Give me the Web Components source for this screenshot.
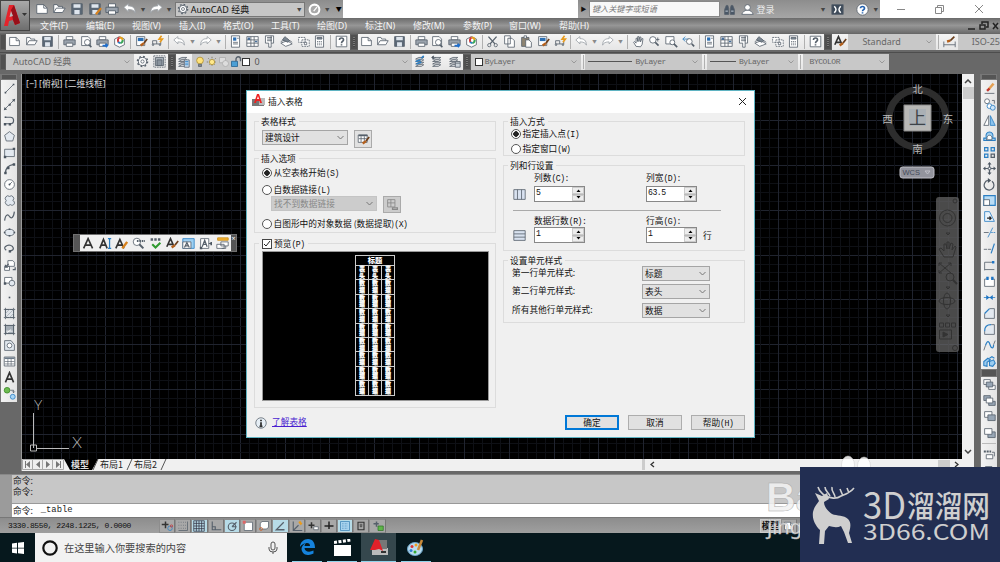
<!DOCTYPE html>
<html lang="zh-CN">
<head>
<meta charset="utf-8">
<title>AutoCAD 经典</title>
<style>
    :root {
        --ui: "Noto Sans", "Noto Sans CJK SC", sans-serif;
        --cjk: "Noto Sans CJK SC", sans-serif;
        --mono: "Liberation Mono", "Noto Sans CJK SC", monospace;
        --chrome: #686868;
        --tool: #efefef;
        --field: #c8c8c8;
    }
    * { box-sizing: border-box; }
    body {
        margin: 0;
        width: 1000px;
        height: 562px;
        overflow: hidden;
        position: relative;
        display: flex;
        flex-direction: column;
        background: var(--chrome);
        font: 8.7px/1 var(--cjk);
        color: #111;
    }
    .bars { display: flex; align-items: center; height: 17px; flex: none; }
    .row1 { height: 17px; }
    .row2 { margin: 2px 0 4px; height: 18px; border-top: 1px solid #4d4d4d; }
    .work { display: flex; height: 397px; flex: none; }
</style>
</head>
<body>
    <app-header></app-header>
    <div class="bars row1">
        <tool-grip></tool-grip>
        <tool-bar items="new open save | print preview plot publish | match block | undo v redo v | props center palette sheet markup calc | help"></tool-bar>
        <tool-grip></tool-grip>
        <tool-bar items="new open save | print preview plot publish | cut copy paste match block | undo v redo v | pan zoomrt zoomwin zoomprev | props center palette sheet markup calc | help"></tool-bar>
        <tool-grip></tool-grip>
        <tool-bar items="textstyle"></tool-bar>
        <cad-combo w="88" pad="14" ui>Standard</cad-combo>
        <tool-bar items="| dimstyle"></tool-bar>
        <cad-combo w="60" pad="14" ui>ISO-25</cad-combo>
    </div>
    <div class="bars row2">
        <tool-grip></tool-grip>
        <cad-combo w="128" pad="7" ui>AutoCAD 经典</cad-combo>
        <tool-bar items="gear wsave"></tool-bar>
        <tool-grip></tool-grip>
        <tool-bar items="layers"></tool-bar>
        <layer-combo></layer-combo>
        <tool-bar items="lmake lprev lstate"></tool-bar>
        <tool-grip></tool-grip>
        <cad-combo w="110" pad="4" swatch>ByLayer</cad-combo>
        <tool-bar items="|"></tool-bar>
        <cad-combo w="117" pad="3" line="44">ByLayer</cad-combo>
        <tool-bar items="|"></tool-bar>
        <cad-combo w="91" pad="3" line="26">ByLayer</cad-combo>
        <tool-bar items="|"></tool-bar>
        <cad-combo w="86" pad="7">BYCOLOR</cad-combo>
    </div>
    <div class="work">
        <tool-column items="line xline pline polygon rect arc circle cloud spline ellipse earc insert mkblock point hatch grad region table mtext addsel" last></tool-column>
        <drawing-area></drawing-area>
        <tool-column items="erase copyobj mirror offset array move rotate scale stretch trim extend brkpt break join chamfer fillet blend explode = front back above under - tofront more"></tool-column>
    </div>
    <command-line></command-line>
    <status-bar></status-bar>
    <task-bar></task-bar>

    <float-bar></float-bar>
    <table-dialog></table-dialog>
    <page-mark></page-mark>
    <site-badge></site-badge>

<script>
// 16x16 icons, default stroke comes from the svg element
const W = 'fill="#fff"';
const B = 'stroke="#2b7fc4"';
const O = 'stroke="#d8821e"';
const DOC = `<path ${W} d="M2 3h8l4 4v6H2z"/><path d="M10 3v4h4"/>`;
const PRN = `<path ${W} d="M4 2h8v4H4z"/><path fill="#9aa3ad" d="M1 6h14v6H1z"/><path ${W} d="M4 10h8v4H4z"/>`;
const LAY = `<path ${W} d="M2 5l4-2h6l-3 2zM2 8l4-2h6l-3 2zM2 11l4-2h6l-3 2zM2 14l4-2h6l-3 2z"/>`;
const BRUSH = `<path stroke="#6b3f1d" stroke-width="2" d="M15 5l-4 5"/><path stroke="#b5601c" stroke-width="3" d="M11 10l-4 3"/>`;
const ICONS = {
    new: DOC,
    open: `<path ${W} d="M2 12V3h4l1 2h5v2"/><path ${W} d="M2 12l3-5h10l-3 5z"/>`,
    save: `<path fill="#5b6876" d="M2 2h12v12H2z"/><path fill="#dfe6ee" stroke="none" d="M4 2.500h8v4H4zM5 9h6v5H5z"/>`,
    saveas: `<path fill="#5b6876" d="M2 2h12v12H2z"/><path fill="#dfe6ee" stroke="none" d="M4 2.500h8v4H4zM5 9h6v5H5z"/><path ${O} stroke-width="2.500" d="M15 7l-6 7"/>`,
    print: PRN,
    preview: `<path ${W} d="M2 2h8l3 3v8H2z"/><circle cx="9" cy="9" r="3.500" ${W}/><path stroke-width="2" d="M11 12l3 3"/>`,
    plot: PRN + `<path stroke="#1d6fd0" stroke-width="2" d="M8 13h6m-2-2l2 2-2 2"/>`,
    publish: `<path ${W} d="M2 5l6-3 6 3v7l-6 3-6-3z"/><path stroke="#e5a11b" stroke-width="2.500" d="M8 3a4 4 0 0 1 4 3"/><path stroke="#3aa654" stroke-width="2.500" d="M12 6a4 4 0 0 1-3 4"/><path stroke="#d23c3c" stroke-width="2.500" d="M8 3a4 4 0 0 0-1 6"/><path stroke="#2b7fc4" stroke-width="2" d="M6 9l3 1"/>`,
    match: `<path ${W} d="M2 2h10v11H2z"/><path fill="#2b6fb4" stroke="none" d="M3.500 3.500h7v4h-7z"/>` + BRUSH,
    block: `<path d="M2 11V7h5v4m-5 0h10V8"/><circle cx="2.500" cy="12" r="1"/><circle cx="11" cy="12" r="1"/><path stroke="#e79a1c" stroke-width="2" d="M13 1l-3 4h4l-3 4"/>`,
    undo: `<path ${W} stroke="#9aa0a6" d="M1 6l5-4v2.500c5 0 8 2 8 8-1-3-4-4-8-4V11z"/>`,
    redo: `<path ${W} stroke="#9aa0a6" d="M15 6l-5-4v2.500c-5 0-8 2-8 8 1-3 4-4 8-4V11z"/>`,
    props: `<path ${W} d="M3 1h10v14H3z"/><path fill="#2b6fb4" stroke="none" d="M5 3h4v4H5z"/><path d="M5 9h6M5 11h6M10 4h2"/>`,
    center: `<path ${W} d="M1 2h14v12H1zM6 2v12M1 6h14M1 10h14M10 2v12"/><path fill="#4a6f99" stroke="none" d="M2 3h3v3H2zM11 7h3v2h-3z"/>`,
    palette: `<path ${W} d="M3 1h10v9h-3v5H7v-5H3z"/><path d="M5 3h6M5 5h6M5 7h6M10 1v9"/>`,
    sheet: `<path ${W} d="M1 10l8-3 6 4-8 3zM1 8l8-3 6 4"/><path fill="#7c8792" d="M3 6l3-4 6 5-2 2z"/>`,
    markup: `<path ${W} stroke-dasharray="2 1" d="M2 3h8v6H2zM6 6h9v8H6z"/><path d="M9 9h3v3H9z"/>`,
    calc: `<path ${W} d="M3 1h10v14H3z"/><path fill="#8a95a0" d="M5 3h6v2H5z"/><path stroke-dasharray="1.500 1" d="M5 8h6M5 10h6M5 12h6"/>`,
    help: `<path ${W} d="M1.500 1.500h13v13h-13z"/><path stroke-width="2" d="M5.500 6c0-3 5-3 5 0 0 2-2.500 1.500-2.500 4M8 11.500v1.500"/>`,
    cut: `<path stroke-width="1.600" d="M3 2l8 9M13 2l-8 9"/><circle cx="4" cy="12.500" r="2"/><circle cx="12" cy="12.500" r="2"/>`,
    copy: `<path ${W} d="M2 1h7v10H2zM6 4h5l3 3v8H6z"/>`,
    paste: `<path fill="#8e8472" d="M2 3h9v11H2z"/><path ${W} d="M5 1h3v3H5zM7 6h4l3 3v6H7z"/>`,
    pan: `<path ${W} d="M5 14L2 9l1-1 2 2V4l1.500 0 .5 4V2h1.500v6l1-5.500h1.500l-.5 6 1.500-4 1.500 0-1 7-2 3z"/>`,
    zoomrt: `<circle cx="6" cy="6" r="4" ${W}/><path stroke-width="2" d="M9 9l4 4"/><path d="M12 3v5m-2-2.500h4"/>`,
    zoomwin: `<path ${W} d="M1 2h10v9H1z"/><circle cx="9" cy="9" r="3" ${W}/><path stroke-width="2" d="M11 11l4 4"/>`,
    zoomprev: `<path ${B} d="M1 5h8M4 2L1 5l3 3"/><circle cx="9" cy="8" r="3.500" ${W}/><path stroke-width="2" d="M12 11l3 3"/>`,
    textstyle: `<path stroke="#333" stroke-width="2" d="M1 12L5.500 2 10 12M3 9h5"/>` + BRUSH,
    dimstyle: `<path d="M1 12h14M1 8v7M15 8v7"/><path stroke="#b5601c" stroke-width="3" d="M5 8l4-1"/><path stroke="#6b3f1d" stroke-width="2" d="M9 7l5-5"/>`,
    gear: `<circle cx="8" cy="8" r="5" ${W} stroke-width="1.200"/><circle cx="8" cy="8" r="6.300" stroke-dasharray="2.200 2.750" stroke-width="1.600"/><circle cx="8" cy="8" r="2"/>`,
    wsave: `<path fill="#a9b1b9" d="M3 3h10v10H3z"/><path stroke-dasharray="2 1" d="M1 1h14v14H1z"/><path fill="#8a949e" d="M5 6h6v7H5z"/>`,
    layers: LAY + `<path fill="#cfe2f5" d="M9 6h6v9H9z"/><path ${B} d="M10 8h4M10 10h4M10 12h4"/>`,
    lmake: LAY + `<path ${B} stroke-width="2" d="M3 11l6-2M2 8l6-2M12 1l-3 3"/>`,
    lprev: LAY + `<path fill="#222" d="M1 3h5M1 3l2-2v4z"/>`,
    lstate: LAY + `<path fill="#cdd4db" d="M9 8h6v7H9z"/><path d="M9 10h6"/>`,
    bulb: `<circle cx="8" cy="6" r="4.500" fill="#ffe27a" stroke="#a98a2a"/><path fill="#888" d="M6 11h4v3H6z"/>`,
    sun: `<path stroke="#6f6a50" stroke-dasharray="2 3" d="M8 1v14M1 8h14M3 3l10 10M13 3L3 13"/><circle cx="8" cy="8" r="3.500" fill="#ffe98c" stroke="#a98a2a"/>`,
    vpf: `<path fill="#ddd" stroke="#aaa" d="M2 2h8v7H2z"/><circle cx="10" cy="10" r="4" fill="#ddd" stroke="#aaa"/>`,
    lock: `<path fill="#4b9fd5" stroke="#1f5e8c" d="M2 7h8v7H2z"/><path stroke-width="1.800" d="M8 7V4a3 3 0 0 1 6 0v3"/>`,
    line: `<path d="M3 13L13 3"/><path class="d" d="M2 12h2v2H2zM12 2h2v2h-2z"/>`,
    xline: `<path d="M2 14L14 2"/><path class="d" d="M1 15l1-4 3 3zM15 1l-4 1 3 3zM7 7h2.500v2.500H7z"/>`,
    pline: `<path stroke-width="1.500" d="M3 12h6a4 4 0 0 0 0-8H3"/><path class="d" d="M1 11h3v3H1zM7 11h3v3H7zM2 3h2v2H2z"/>`,
    polygon: `<path fill="#e3e9f0" d="M8 2l6 4.500-2 7H4l-2-7z"/>`,
    rect: `<path fill="#e3e9f0" d="M2 4h12v9H2z"/><path class="d" d="M1 12h3v3H1zM12 2h3v3h-3z"/>`,
    arc: `<path stroke-width="1.500" d="M3 14C3 8 7 4 13 3"/><path class="d" d="M1.500 12h3v3h-3zM12 1.500h3v3h-3zM5 6h3v3H5z"/>`,
    circle: `<circle cx="8" cy="8" r="6" ${W}/><path d="M8 8l3-3"/><circle class="d" cx="8" cy="8" r="1.200"/>`,
    cloud: `<path fill="#e3e9f0" d="M4 8a3 3 0 1 1 4-5 3 3 0 1 1 4 5 3 3 0 1 1-3 5 3 3 0 1 1-5-5z"/>`,
    spline: `<path stroke-width="1.500" d="M2 13c1-8 4-8 6-5s5 2 6-6"/>`,
    ellipse: `<ellipse cx="8" cy="8" rx="6" ry="4" fill="#e3e9f0"/><path class="d" d="M7 3h2v2H7zM1 7h2v2H1zM13 7h2v2h-2zM7 11h2v2H7z"/>`,
    earc: `<path stroke-width="1.500" d="M4 10c-5-3 1-7 5-6s6 6 0 7"/><path class="d" d="M7 10h3v3H7z"/>`,
    insert: `<path ${W} d="M6 2h6l2 2v5H6zM2 9h6v5H2z"/><path stroke-width="1.500" d="M7 6l-4 4m0-3v3h3M12 13h3v-3"/>`,
    mkblock: `<path ${W} d="M2 3h9v7H2z"/><circle cx="11" cy="10" r="3.500" fill="#e3e9f0"/><path class="d" d="M1 9h3v3H1z"/>`,
    point: `<path class="d" d="M7 7h2v2H7z"/>`,
    hatch: `<path fill="#dfe3e8" d="M3 3h10v10H3z"/><path d="M3 1v14M13 1v14M1 3h14M1 13h14"/><path stroke="#98a1aa" d="M3 8l5-5M3 13L13 3M8 13l5-5" stroke-width=".8"/>`,
    grad: `<path fill="#a5adb5" d="M3 3h10v10H3z"/><path d="M3 1v14M13 1v14M1 3h14M1 13h14"/><path stroke="#fff" d="M4 10h8M5 12l5-4"/>`,
    region: `<path fill="#e3e9f0" d="M2 2h8l4 5v7H2z"/><circle cx="8" cy="8" r="3" ${W}/>`,
    table: `<path ${W} d="M1.500 2.500h13v11h-13z"/><path fill="#6c7a89" stroke="none" d="M2 3h12v2H2z"/><path stroke-width=".8" d="M2 8h12M2 11h12M6 5v8M10 5v8"/>`,
    mtext: `<path stroke="#333" stroke-width="2" d="M3 14L8 2l5 12M5 10h6"/>`,
    addsel: `<circle cx="5" cy="4" r="3.500" fill="#6dbb4f" stroke="#3c8a2a"/><circle cx="12" cy="12" r="3" fill="#a9d6f5" stroke="#2b7fc4"/><path d="M9 4h4v3m-1.500-1.500L13 7l1.500-1.500"/>`,
    erase: `<path stroke="#e4a052" stroke-width="3" d="M13 2L7 9"/><path stroke="#c2372f" stroke-width="3" d="M8 8l-3 3"/><path d="M2 14h12"/>`,
    copyobj: `<circle cx="5" cy="4" r="3" ${W}/><circle cx="8" cy="10" r="3" fill="#fff" ${B}/><circle cx="12" cy="12" r="3" fill="#cde6fa" ${B}/><path d="M11 3h3v4"/>`,
    mirror: `<path ${W} d="M7 2v12H1z"/><path fill="#8cc4ee" ${B} d="M9 2v12h6z"/>`,
    offset: `<path fill="#9ccdf0" ${B} stroke-width="1.300" d="M1 13h14v-3h-3c3-10-11-10-8 0H1z"/><path ${W} d="M4 12h7v-1c1-6-7-6-6 0z"/>`,
    array: `<path ${B} stroke-width="1.500" d="M2 2h4v4H2zM10 2h4v4h-4zM2 10h4v4H2z"/><path stroke-width="1.500" d="M10 10h4v4h-4z"/>`,
    move: `<path stroke-width="1.500" d="M8 2v12M2 8h12"/><path class="d" d="M8 0l2.500 3h-5zM8 16l2.500-3h-5zM0 8l3-2.500v5zM16 8l-3-2.500v5z"/><path ${W} d="M6.500 6.500h3v3h-3z"/>`,
    rotate: `<path stroke-width="1.500" d="M6 3a6 6 0 1 0 5 1"/><path class="d" d="M6 0v6l4-3z"/>`,
    scale: `<path fill="#b9dcf5" ${B} stroke-width="1.500" d="M1 2h14v12H1z"/><path ${W} d="M1 7h7v7H1z"/>`,
    stretch: `<path fill="#e9f3fb" ${B} d="M2 2h6l6 12H2z"/><path stroke="#222" stroke-width="1.500" d="M5 10h5m-2-2l2 2-2 2"/>`,
    trim: `<path ${B} d="M6 14L12 2"/><path d="M1 8h6"/><path ${B} stroke-dasharray="2 1" d="M10 8h5"/>`,
    extend: `<path ${B} stroke-width="1.500" d="M10 14l4-12"/><path stroke-dasharray="4 1" d="M1 9h10"/>`,
    brkpt: `<path d="M2 14V4h9M2 13h12"/><path class="b" d="M11 2.500h3v3h-3z"/>`,
    break: `<path ${W} d="M4 5H2v9h12V5h-2"/><path class="b" d="M4 2h3v4H4zM10 2h3v4h-3z"/>`,
    join: `<path ${B} d="M1 8h14"/><path class="b" d="M4 5l4 3-4 3zM12 5L8 8l4 3z"/>`,
    chamfer: `<path fill="#e3e9f0" d="M8 2h6v12H2V8"/><path ${B} stroke-width="1.500" d="M2 8l6-6"/>`,
    fillet: `<path fill="#e3e9f0" d="M10 2h4v12H2v-4"/><path ${B} stroke-width="1.500" d="M2 10c0-5 3-8 8-8"/>`,
    blend: `<path ${B} stroke-width="1.500" d="M3 8c3-9 5-3 6 0s4 5 4-1"/><path d="M1 14l2-6M13 7l2-5"/>`,
    explode: `<path fill="#9ccdf0" ${B} stroke-width="1.300" d="M1 13V8l5-4 3 2-4 3v5zM8 13V8l5-2 2 4-3 4zM8 4l3-2 3 2"/>`,
    front: `<path ${W} d="M1 2h8v6H1zM7 9h8v5H7z"/><path fill="#98a6b5" d="M4 5h8v6H4z"/>`,
    back: `<path fill="#98a6b5" d="M1 2h8v6H1zM7 9h8v5H7z"/><path ${W} d="M4 5h8v6H4z"/>`,
    above: `<path ${W} d="M2 2h9v7H2z"/><path fill="#98a6b5" d="M6 6h9v7H6z"/>`,
    under: `<path fill="#98a6b5" d="M6 6h9v7H6z"/><path ${W} d="M2 2h9v7H2z"/>`,
    tofront: `<path stroke-width="2.500" stroke-dasharray="2.500 1" d="M1 3h9"/><path ${W} d="M4 7h8v5H4z"/><path d="M11 4h3v5"/>`,
    more: `<path fill="#7c8b9b" d="M3 2h8v5H3z"/><path ${W} d="M7 6h7v8H7z"/>`,
    txtA: `<path stroke="#333" stroke-width="2" d="M2 14L7.500 2 13 14M4 10h7"/>`,
    txtI: `<path stroke="#333" stroke-width="2" d="M1 14L5.500 3 10 14M3 10h6"/><path ${B} stroke-width="1.500" d="M13 2v12M11 2h4M11 14h4"/>`,
    txtE: `<path stroke="#333" stroke-width="2" d="M1 14L6 3l5 11M3 10h6"/><path ${O} stroke-width="3" d="M15 6l-6 8"/>`,
    find: `<circle cx="6" cy="6" r="4.500" ${W}/><path stroke-width="2.500" d="M9 9l5 5"/><path stroke-width="2.500" stroke-dasharray="2 1" d="M6 5h10"/>`,
    spell: `<path stroke-width="3" stroke-dasharray="3 1.500" d="M2 3h13"/><path stroke="#2f9a2f" stroke-width="2.500" d="M4 9l4 4 6-6"/>`,
    tscale: `<path fill="#9dd0f3" ${B} d="M1 2h14v12H1z"/><path ${W} d="M1 6h10v8H1z"/><path stroke-width="1.500" d="M3 13l3-6 3 6M4 11h4"/>`,
    tjust: `<path ${W} d="M2 2h10v12H2z"/><path stroke-width="1.500" d="M4 12l3-8 3 8M5 9h4M12 8h4"/><path class="d" d="M1 12h3v3H1zM14 6h2v4h-2z"/>`,
    tspace: `<path fill="#f2b233" stroke="#c98a12" d="M2 1h13v3H2z"/><path ${W} d="M6 6h9v5H6zM1 9h9v5H1z"/><path d="M12 11v3h-5"/>`,
    infer: `<path stroke="#333" stroke-width="2" d="M6 2v9M1 6h9"/><circle cx="12" cy="11" r="3" stroke="#2b7fc4"/><circle cx="14" cy="8" r="1.500" stroke="#c33"/>`,
    snap: `<path stroke-dasharray="1 2" d="M2 3h10M2 7h10M2 11h10"/><path d="M14 2v12H2"/>`,
    grid: `<path stroke="#334" d="M1 1h14v14H1zM1 4.500h14M1 8h14M1 11.500h14M4.500 1v14M8 1v14M11.500 1v14"/>`,
    ortho: `<path stroke-width="1.500" d="M3 2v11h12M3 9h4v4"/>`,
    polar: `<circle cx="8" cy="9" r="5" stroke-width="1.500"/><path stroke-width="1.500" d="M8 9h6M8 9l6-6"/>`,
    osnap: `<path ${W} d="M3 3h11v11H3z"/><path fill="#d66" stroke="none" d="M1 1h4v4H1z"/>`,
    osnap3: `<path ${W} d="M5 2h9v8l-3 2H3V5z"/><circle cx="4" cy="12" r="2" stroke="#c63"/>`,
    otrack: `<path stroke-width="1.700" d="M13 3L3 13h11"/>`,
    ducs: `<path stroke-width="1.500" d="M3 2v12h12M3 14l7-7"/><path stroke="#e99a1c" stroke-width="3" d="M11 2l3 4"/>`,
    dyn: `<path stroke="#333" stroke-width="2" d="M6 3v8M2 7h8"/><path ${W} d="M9 9h6v4H9z"/>`,
    lwt: `<path stroke="#222" stroke-width="2" d="M2 8h12M8 2v10"/>`,
    tpy: `<path fill="#a9d3ee" stroke="#3c83b5" d="M2 2h12v12H2z"/><path stroke="#3c83b5" stroke-dasharray="1 1" d="M4 5h8M4 8h8M4 11h8"/>`,
    qp: `<path stroke="#333" stroke-width="1.500" d="M4 3h8v10H4z"/><path stroke="#333" d="M7 5v4h2V5"/>`,
    sc: `<path stroke-width="2" d="M2 5h7M6 2v7"/><path fill="#5eb54a" stroke="#32752a" d="M8 8h7v6H8z"/>`,
    binoc: `<path fill="#4a5766" d="M2 14V8l2-5h2l1 4v7zM14 14V8l-2-5h-2L9 7v7z"/><path stroke="#dfe6ee" d="M3 10h3M10 10h3"/>`,
    user: `<circle cx="8" cy="5.500" r="3.500" ${W}/><path ${W} d="M1 14c1-4 4-4 5-5h4c1 1 4 1 5 5z"/>`,
    xchg: `<path fill="#3d4a59" d="M1 2h14v12H1z"/><path stroke="#fff" stroke-width="2" d="M4 4c3 3 3 5 0 8M12 4c-3 3-3 5 0 8"/>`,
    qhelp: `<circle cx="8" cy="8" r="7" ${W}/><path stroke="#2462b0" stroke-width="2" d="M5.500 6.500c0-3 5-3 5 0 0 2-2.500 1.500-2.500 3.500M8 11.500v1.500"/>`,
    gauge: `<circle cx="8" cy="8" r="6" fill="#a9a9a9" stroke="#fff" stroke-width="2.500"/><path stroke="#fff" stroke-width="1.500" d="M7 10l4-5"/>`,
    tablebtn: `<path ${W} d="M1.500 2.500h11v9h-11zM5 4v7M9 4v7M2 7h10"/><path stroke-width="2" d="M2 3h11"/>` + BRUSH,
    linkbtn: `<path stroke="#888" d="M2 2h9v9H2zM2 6h9M6 2v9"/><path stroke="#888" stroke-width="1.500" d="M8 12h6v2H8z"/>`,
    cols: `<path fill="#d9e2f0" d="M1 2h14v12H1zM5.500 2v12M10.500 2v12"/>`,
    rows: `<path fill="#d9e2f0" d="M1 2h14v12H1zM1 6h14M1 10h14"/>`,
    info: `<circle cx="8" cy="8" r="7" fill="#e6eef5"/><path stroke="#333" stroke-width="2.400" d="M8 7v5.500M8 3.500v2M6 12.500h4"/>`
};

class CadElement extends HTMLElement {
    constructor() {
        super();
        this.attachShadow({ mode: "open" });
    }
    connectedCallback() {
        this.shadowRoot.innerHTML = `<style>*{box-sizing:border-box}${this.css()}</style>${this.html()}`;
    }
    css() { return ":host{display:block}"; }
    html() { return "<slot></slot>"; }
}

class CadIcon extends CadElement {
    css() {
        return `:host{display:block;flex:none;line-height:0}
            .d{fill:#4b5560;stroke:none}.b{fill:#1d74c4;stroke:none}`;
    }
    html() {
        const s = this.getAttribute("size") || 13;
        return `<svg width="${s}" height="${s}" viewBox="0 0 16 16" fill="none" stroke="#56606b">${ICONS[this.getAttribute("name")] || ""}</svg>`;
    }
}
customElements.define("cad-icon", CadIcon);

class ToolGrip extends CadElement {
    css() {
        return `:host{display:block;flex:none;width:8px;height:16px;padding:2px 2px;background:#505050;border:1px solid #5f5f5f}
            i{display:block;height:100%;background:repeating-linear-gradient(#777 0 1px,#444 1px 2px)}`;
    }
    html() { return "<i></i>"; }
    connectedCallback() {
        super.connectedCallback();
        // the first grip of a row is cut by the window edge
        if (!this.previousElementSibling) this.style.width = "6px";
    }
}
customElements.define("tool-grip", ToolGrip);

class ToolBar extends CadElement {
    css() {
        return `:host{display:flex;flex:none;height:16px;align-items:center;background:linear-gradient(#f4f4f4,#e6e6e6)}
            .c{width:16.8px;display:flex;justify-content:center}
            .s{width:4.6px;height:14px;display:flex;justify-content:center}
            .s::before{content:"";width:1px;background:#b0b0b0}
            .v{width:9px;text-align:center;font-size:4.500px;color:#888}
            .u{width:17px}`;
    }
    html() {
        return this.getAttribute("items").split(" ").map(n => {
            if (n === "|") return `<span class="s"></span>`;
            if (n === "v") return `<span class="v">▼</span>`;
            return `<span class="c ${n === "undo" || n === "redo" ? "u" : ""}"><cad-icon name="${n}"></cad-icon></span>`;
        }).join("");
    }
}
customElements.define("tool-bar", ToolBar);

class CadCombo extends CadElement {
    css() {
        return `:host{display:flex;flex:none;align-items:center;height:16px;background:var(--field);color:#666;
                width:${this.getAttribute("w")}px;padding:0 4px 0 ${this.getAttribute("pad")}px;
                font:${this.hasAttribute("ui") ? "9px var(--ui)" : "8px var(--mono);letter-spacing:-.45px"};white-space:nowrap}
            span{flex:1}
            .sw{flex:none;width:8px;height:8px;border:1px solid #333;background:#fff;margin-right:2px}
            .ln{flex:none;height:1px;background:#555;margin-right:3px}
            svg{flex:none}`;
    }
    html() {
        const line = this.getAttribute("line");
        return `${this.hasAttribute("swatch") ? `<i class="sw"></i>` : ""}
            ${line ? `<i class="ln" style="width:${line}px"></i>` : ""}
            <span><slot></slot></span>
            <svg width="6" height="4" viewBox="0 0 6 4" fill="none" stroke="#999"><path d="M.5.5L3 3 5.500.5"/></svg>`;
    }
}
customElements.define("cad-combo", CadCombo);

class LayerCombo extends CadElement {
    css() {
        return `:host{display:flex;flex:none;align-items:center;width:220px;height:16px;padding:0 4px 0 2px;background:var(--field);color:#555;font:9px var(--ui)}
            .sw{width:8px;height:8px;border:1px solid #333;background:#fff;margin-right:4px}
            span{flex:1}`;
    }
    html() {
        return ["bulb", "sun", "vpf", "lock"].map(n => `<cad-icon name="${n}" size="12"></cad-icon>`).join("") +
            `<i class="sw"></i><span>0</span><svg width="6" height="4" fill="none" stroke="#999"><path d="M.5.5L3 3 5.500.5"/></svg>`;
    }
}
customElements.define("layer-combo", LayerCombo);

class AppHeader extends CadElement {
    css() {
        return `:host{display:grid;flex:none;grid-template:18px 15px / 30px 1fr;height:33px;background:#777}
            .app{grid-row:1/3;background:linear-gradient(#a9a9a9,#6e6e6e);border:1px solid #444;height:31px}
            .top{display:flex;background:#fff}
            .qa,.info{display:flex;align-items:center;background:linear-gradient(#8d8d8d,#a6a6a6)}
            .qa{width:313px;padding-left:3px}
            .c{width:17.700px;display:flex;justify-content:center}
            .v{width:8.500px;text-align:center;font-size:4.500px;color:#444}
            .ws{display:flex;align-items:center;width:131px;height:15px;background:#c6c6c6;border:1px solid #777;padding:0 1px;margin-left:1.500px;font:9px var(--ui);color:#111}
            .ws b{flex:1;font-weight:400;margin-left:2px;white-space:nowrap}
            .info{margin-left:235px;width:302px}
            .arr{width:11px;text-align:center;font-size:6px;color:#111}
            .find{width:131px;height:16px;background:#f8f8f8;font:italic 8.100px/14px var(--cjk);color:#777;padding-left:2px;margin-right:1px;border:1px solid #888}
            .in{color:#eee;font:9px/1 var(--cjk);flex:1;padding-left:0}
            .win{flex:1;display:flex;justify-content:space-around;align-items:center;padding:0 2px}
            nav{grid-column:2;display:grid;grid-template-columns:46px 46px 47px 44px 48px 46px 48px 48px 50px 46px 50px 1fr auto;
                padding-left:10px;align-items:center;background:linear-gradient(#6b6b6b,#969696 50%,#6d6d6d);color:#f4f4f4;font:9px/14px var(--ui);white-space:nowrap}
            .doc{width:34px}`;
    }
    html() {
        const ic = (n, s = 14) => `<span class="c"><cad-icon name="${n}" size="${s}"></cad-icon></span>`;
        const v = `<span class="v">▼</span>`;
        const menus = ["文件(F)", "编辑(E)", "视图(V)", "插入(I)", "格式(O)", "工具(T)", "绘图(D)", "标注(N)", "修改(M)", "参数(P)", "窗口(W)", "帮助(H)"];
        return `
            <div class="app"><svg width="28" height="29" viewBox="0 0 28 29"><path fill="#e5232b" d="M3 25L8 4h5l6 18-5 2-2-5-4 1-1 5z"/><path fill="#97101a" d="M13 4l6 18-5 2-2-5-2-10z"/><path fill="#bbb" d="M8.500 16l1.500-6 2 5z"/><path fill="#333" d="M21 12h5l-2.500 3z"/></svg></div>
            <div class="top">
                <div class="qa">${ic("new")}${ic("open")}${ic("save")}${ic("saveas")}${ic("print")}${ic("undo")}${v}${ic("redo")}${v}
                    <div class="ws"><cad-icon name="gear" size="12"></cad-icon><b>AutoCAD 经典</b>${v}</div>
                    ${ic("gauge", 13)}${v}<span class="v" style="margin-left:3px;color:#000;font-size:6px">▼</span></div>
                <div class="info"><span class="arr">▶</span><span class="find">键入关键字或短语</span>
                    ${ic("binoc", 13)}${ic("user", 13)}<span class="in">登录</span>${v}
                    <span style="width:2px"></span>${ic("xchg", 13)}<span style="width:7px"></span>${ic("qhelp", 13)}${v}</div>
                <div class="win">
                    <svg width="8" height="8" stroke="#888"><path d="M0 4.500h8"/></svg>
                    <svg width="9" height="9" fill="none" stroke="#888"><path d="M.5 2.500h6v6h-6zM2.500 2V.5h6v6H7"/></svg>
                    <svg width="8" height="8" stroke="#888"><path d="M0 0l8 8M8 0L0 8"/></svg>
                </div>
            </div>
            <nav>${menus.map(m => `<span>${m}</span>`).join("")}
                <svg class="doc" height="10" fill="none" stroke="#222" stroke-width="1.500"><path d="M2 8h7M14 4h5v4h-5zM16 3V1h6v5h-2M27 2l5 6M32 2l-5 6"/></svg></nav>`;
    }
}
customElements.define("app-header", AppHeader);

class ToolColumn extends CadElement {
    css() {
        return `:host{display:block;flex:none;width:18px;padding-right:1px}
            .box{background:linear-gradient(90deg,#f3f3f3,#e4e4e4);border-left:1px solid #777}
            .c{height:16.100px;display:flex;align-items:center;justify-content:center}
            .g{height:6px;background:#555;border:1px solid #777}
            .g.m{height:8px;margin-top:-1px}
            .s{height:4px;border-top:1px solid #bbb;margin:2px 1px 0}`;
    }
    html() {
        return `<div class="box"><div class="g"></div>` + this.getAttribute("items").split(" ").map(n => {
            if (n === "=") return `<div class="g m"></div>`;
            if (n === "-") return `<div class="s"></div>`;
            return `<div class="c"><cad-icon name="${n}"></cad-icon></div>`;
        }).join("") + "</div>";
    }
}
customElements.define("tool-column", ToolColumn);

class DrawingArea extends CadElement {
    css() {
        return `:host{display:grid;flex:none;width:953px;height:397px;margin:0 6px 0 3px;grid-template:385px 12px / 1fr 12px;background:#f0f0f0;border-left:1px solid #999}
            .view{background:#000;position:relative;overflow:hidden}
            .view svg{position:absolute;left:0;top:0}
            .label{position:absolute;left:4px;top:5px;font:8.800px/10px var(--ui);color:#ddd;white-space:pre}
            .vs{display:flex;flex-direction:column;align-items:center;justify-content:space-between;padding:5px 0}
            .vs i{width:11px;height:12px;background:#ccc;margin-bottom:auto;margin-top:3px}
            .tabs{grid-column:1/3;display:flex;align-items:center;background:#f0f0f0;height:11px}
            .tabs svg{flex:none}
            .hs{margin-left:auto;width:332px;display:flex;align-items:center;border-left:3px solid #ccc;height:11px;padding:0 15px 0 5px}
            .hs i{width:12px;height:10px;background:#ccc;margin:0 4px 0 auto}
            .nav{position:absolute;left:914px;top:123px;width:23px;height:155px;background:rgba(105,105,105,.7);border-radius:3px}`;
    }
    html() {
        let lines = "";
        // a thin line each 9 px, a stronger one each fifth
        for (let i = -4; i < 110; i++) {
            const c = i % 5 === 0 ? "#20242f" : "#0e1015";
            const x = Math.round(38.500 + i * 8.965) + .5, y = Math.round(46 + i * 8.970) + .5;
            lines += `<path stroke="${c}" d="M${x} 0V385"/>`;
            if (y < 385) lines += `<path stroke="${c}" d="M0 ${y}H945"/>`;
        }
        return `
            <div class="view">
                <svg width="941" height="385" fill="none">${lines}
                    <g stroke="#bbb"><path d="M11.500 339V374M15 374.500H47M8.500 371h6v6h-6z"/></g>
                    <g fill="#bbb" font-family="Lato, sans-serif" font-weight="300"><text x="12" y="335.500" font-size="14">Y</text><text x="50" y="374" font-size="16">X</text></g>
                    <circle cx="895.500" cy="44.500" r="28.500" stroke="#2d2d2d" stroke-width="7"/>
                    <path fill="#b8b8b6" stroke="#888" d="M882 31h27v26h-27z"/>
                    <path fill="#aab0b5" d="M887 35h17v17h-17z"/>
                    <g fill="#b9b9b9" font-family="'Noto Sans CJK SC', sans-serif" font-size="10.500" text-anchor="middle">
                        <text x="895.500" y="18.500">北</text><text x="895.500" y="79">南</text>
                        <text x="865.500" y="49">西</text><text x="926" y="49">东</text>
                        <text x="895.500" y="50" font-size="17" fill="#3d4348">上</text>
                    </g>
                    <rect x="878" y="93" width="34" height="11" rx="2.500" fill="#93949d" stroke="#c0c0c8"/>
                    <text x="880.500" y="101" font-family="Liberation Sans, sans-serif" font-size="7.500" fill="#454b58">WCS</text>
                    <path d="M903 97h5l-2.500 3z" stroke="#c0c0c8"/>
                </svg>
                <div class="nav"><svg width="23" height="155" fill="none" stroke="#333">
                    <circle cx="19" cy="4" r="2"/><circle cx="11.500" cy="21" r="8"/><circle cx="11.500" cy="21" r="4.500"/><path d="M10 36h4l-2 2z"/>
                    <path d="M8 60l-5-8 2-1 3 3v-7l2 0 1 5v-7h2v7l2-6 2 1-1 6 3-4 1 1-3 10z"/>
                    <path d="M3 66l12 10M3 76L15 66M3 69v-3h3M12 66h3v3M3 73v3h3"/><circle cx="14" cy="80" r="4"/><path stroke-width="2" d="M17 83l4 4"/>
                    <path d="M10 90h4l-2 2z"/><ellipse cx="11" cy="104" rx="8" ry="3.500"/><ellipse cx="11" cy="104" rx="3.500" ry="8"/><path d="M10 118h4l-2 2z"/>
                    <path d="M3.500 126h4v4h-4zM9.500 126h4v4h-4zM15.500 126h4v4h-4zM3.500 133h12v9h-12z"/><path fill="#333" d="M7 135l5 2.500-5 2.500z"/><circle cx="19" cy="151" r="2.500"/>
                </svg></div>
                <div class="label">[−] [俯视] [二维线框]</div>
            </div>
            <div class="vs">
                <svg width="8" height="5" fill="none" stroke="#444" stroke-width="1.500"><path d="M1 4l3-3 3 3"/></svg><i></i>
                <svg width="8" height="5" fill="none" stroke="#444" stroke-width="1.500"><path d="M1 1l3 3 3-3"/></svg>
            </div>
            <div class="tabs">
                <svg width="150" height="11" fill="none" stroke="#aaa">
                    <path d="M.5.500h41v10H.5zM10.500 0v11M20.500 0v11M30.500 0v11"/>
                    <g fill="#777" stroke="none"><path d="M8 2v7L4 5.500zM3 2h1v7H3zM18 2v7l-4-3.500zM24 2v7l4-3.500zM34 2v7l4-3.500zM38 2h1v7h-1z"/></g>
                    <path fill="#000" stroke="none" d="M42 0h34l-6 11H48z"/>
                    <path stroke="#555" d="M76 0l-5 11M110 0l-5 11M144 0l-5 11"/>
                    <g stroke="none" font-family="'Noto Sans CJK SC', sans-serif" font-size="9"><text x="49" y="8.800" fill="#ddd" font-weight="700">模型</text><text x="78" y="8.800" fill="#222">布局1</text><text x="112" y="8.800" fill="#222">布局2</text></g>
                </svg>
                <div class="hs">
                    <svg width="5" height="7" fill="none" stroke="#333" stroke-width="1.300"><path d="M4 1L1 3.500 4 6"/></svg><i></i>
                    <svg width="5" height="7" fill="none" stroke="#333" stroke-width="1.300"><path d="M1 1l3 2.500L1 6"/></svg>
                </div>
            </div>`;
    }
}
customElements.define("drawing-area", DrawingArea);

class CommandLine extends CadElement {
    css() {
        return `:host{display:flex;flex:none;height:43px;margin-top:3px;background:#9b9b9b;border-top:1px solid #888}
            .g{width:12px}
            .b{flex:1;background:#c7c7c7;font:8.700px/11px var(--cjk);color:#222}
            .b p,.i{padding-left:1px}
            .h{height:29px;border-bottom:1px solid #999}
            .i{background:#fff;height:13px;line-height:13px;display:flex}
            tt{font:8.800px/13px var(--mono);white-space:pre;margin-left:8px}
            p{margin:0}`;
    }
    html() {
        return `<div class="g"></div><div class="b"><div class="h"><p>命令:</p><p>命令:</p></div><div class="i"><span>命令:</span><tt>_table</tt></div></div>`;
    }
}
customElements.define("command-line", CommandLine);

class StatusBar extends CadElement {
    css() {
        return `:host{display:flex;flex:none;align-items:center;height:16px;background:linear-gradient(#8d8d8d,#9f9f9f);border-top:1px solid #777}
            .xyz{width:159px;padding-left:8px;font:8px/1 var(--mono);letter-spacing:-.41px;color:#111;white-space:pre}
            .c{width:16.200px;height:14px;display:flex;align-items:center;justify-content:center;border:1px solid #8d8d8d;border-right-color:#777;background:#a8a8a8}
            .on{background:#b7dbe7}
            .m{margin-left:374px;height:14px;width:21px;padding:0 1px;border:1px solid #ccc;background:#bbb;font:bold 8.700px/12px var(--cjk);white-space:nowrap}`;
    }
    html() {
        const on = ["grid", "polar", "otrack", "tpy"];
        return `<span class="xyz">3330.8550, 2248.1225, 0.0000</span>` +
            "infer snap grid ortho polar osnap osnap3 otrack ducs dyn lwt tpy qp sc".split(" ").map(n =>
                `<span class="c ${on.includes(n) ? "on" : ""}"><cad-icon name="${n}" size="12"></cad-icon></span>`).join("") +
            `<span class="m">模型</span><span class="c"><cad-icon name="new" size="12"></cad-icon></span>`;
    }
}
customElements.define("status-bar", StatusBar);

class TaskBar extends CadElement {
    css() {
        return `:host{display:flex;flex:none;height:30px;background:#06181d}
            .win{width:35px;display:flex;align-items:center;justify-content:center}
            .q{width:252px;background:#f2f2f2;display:flex;align-items:center;padding:0 9px 0 7px;font:10.200px/1 var(--ui);color:#444}
            .q span{flex:1;padding-left:6px}
            .a{width:30px;display:flex;align-items:center;justify-content:center;border-bottom:2px solid #8fd3ea;margin-left:5px}
            .on{background:#35474d;width:35px;margin-left:4px}`;
    }
    html() {
        return `
            <div class="win"><svg width="12" height="12" fill="#fff"><path d="M0 1.500l5-.7v5H0zM6 .7l6-.7v5.800H6zM0 6.500h5v5l-5-.7zM6 6.500h6V12l-6-.7z"/></svg></div>
            <div class="q"><svg width="16" height="16"><circle cx="8" cy="8" r="6.700" fill="none" stroke="#111" stroke-width="2.200"/></svg>
                <span>在这里输入你要搜索的内容</span>
                <svg width="10" height="14" fill="none" stroke="#555"><rect x="3" y="1" width="4" height="8" rx="2"/><path d="M1 6v2a4 3 0 0 0 8 0V6M5 11v2"/></svg></div>
            <div class="a"><svg width="16" height="16" viewBox="0 0 16 16"><path fill="#1583dd" d="M1 8C1 3 5 0 9 0c5 0 7 4 7 9H5.500c.5 4 5 4.500 9 2.500v3C8 18 3 15 2.500 10 3 6 6 4.500 7 4c-1 1-1.500 2-1.500 3h5.500c0-2-1-3-3-3-3 0-6 2-7 4z"/></svg></div>
            <div class="a"><svg width="17" height="17"><path fill="#fff" d="M0 6h17v11H0z"/><path stroke="#fff" stroke-width="3" stroke-dasharray="3 1.500" d="M0 3.500L17 1"/></svg></div>
            <div class="a on"><svg width="18" height="16"><path fill="#bbb" d="M2 9h16v7H2z"/><path fill="#777" d="M8 1h9v9H8z"/><path fill="#333" d="M11 12h5v2h-5z"/><path fill="#e0202a" d="M0 11L5 0l4 1 4 11-4-2-4 1z"/></svg></div>
            <div class="a"><svg width="18" height="17"><ellipse cx="8" cy="10" rx="7.500" ry="6.500" fill="#b9dcf0" stroke="#6aa6cb"/><circle cx="5" cy="7.500" r="1.500" fill="#d33"/><circle cx="9" cy="6" r="1.500" fill="#f0a020"/><circle cx="4" cy="11.500" r="1.500" fill="#2f7fd0"/><circle cx="8" cy="13" r="1.500" fill="#3a3"/><path stroke="#c88a3a" stroke-width="2.500" d="M15 1l-4 10"/></svg></div>`;
    }
}
customElements.define("task-bar", TaskBar);

class FloatBar extends CadElement {
    css() {
        return `:host{position:absolute;left:73px;top:234px;width:164px;height:18px;display:flex;align-items:center;background:#555;border:1px solid #707070}
            .g{width:6px}
            .b{display:flex;width:151px;height:16px;background:#f0f0f0;align-items:center;justify-content:space-around}
            .x{align-self:flex-start;color:#fff;font:7px/7px var(--ui);padding-left:.5px}`;
    }
    html() {
        return `<div class="g"></div><div class="b">` +
            "txtA txtI txtE find spell textstyle tscale tjust tspace".split(" ").map(n => `<cad-icon name="${n}"></cad-icon>`).join("") +
            `</div><span class="x">×</span>`;
    }
}
customElements.define("float-bar", FloatBar);

/* dialog controls */

class GroupBox extends CadElement {
    css() {
        return `:host{display:block;height:${this.getAttribute("h")}px;border:1px solid #dcdcdc;padding:0 7px}
            .t{display:flex;width:fit-content;height:13px;margin:-7px 0 0 -3px;padding:0 3px 0 2px;background:#f0f0f0;line-height:13px;align-items:center}`;
    }
    html() { return `<div class="t"><slot name="title">${this.getAttribute("label") || ""}</slot></div><slot></slot>`; }
}
customElements.define("group-box", GroupBox);

class KeyLabel extends CadElement {
    css() {
        return `:host{display:inline-block;white-space:nowrap;line-height:11px}
            i{font:normal 8.200px/11px var(--mono);letter-spacing:-.5px}`;
    }
    html() { return `<slot></slot><i>(${this.getAttribute("key")})${this.hasAttribute("colon") ? ":" : ""}</i>`; }
}
customElements.define("key-label", KeyLabel);

class RadioItem extends CadElement {
    css() {
        return `:host{display:flex;align-items:center;height:15px;gap:1.500px}
            b{width:10px;height:10px;border:1px solid #555;border-radius:50%;background:${this.hasAttribute("on") ? "radial-gradient(circle,#222 0 2.500px,#fff 3px)" : "#fff"}}`;
    }
    html() { return `<b></b><slot></slot>`; }
}
customElements.define("radio-item", RadioItem);

class DlgSelect extends CadElement {
    css() {
        const off = this.hasAttribute("off");
        return `:host{display:flex;align-items:center;justify-content:space-between;width:${this.getAttribute("w")}px;height:15px;padding:0 3px 0 2px;
            border:1px solid ${off ? "#c4c4c4" : "#a5a5a5"};background:${off ? "#ccc" : "#e1e1e1"};color:${off ? "#888" : "#111"}}`;
    }
    html() { return `<slot></slot><svg width="7" height="5" fill="none" stroke="#777"><path d="M.5 1l3 3 3-3"/></svg>`; }
}
customElements.define("dlg-select", DlgSelect);

class SpinBox extends CadElement {
    css() {
        return `:host{display:flex;width:51px;height:16px;border:1px solid #888;background:#fff;font:8.200px/12px var(--mono);letter-spacing:-.5px;padding-left:1px}
            span{flex:1}
            div{width:12px;display:flex;flex-direction:column;gap:1px;background:#bbb}
            i{flex:1;background:#ededed;display:flex;align-items:center;justify-content:center;border:1px solid #ccc}`;
    }
    html() {
        return `<span><slot></slot></span><div><i><svg width="5" height="3"><path d="M.5 3h4L2.500.5z"/></svg></i><i><svg width="5" height="3"><path d="M.5 0h4l-2 2.500z"/></svg></i></div>`;
    }
}
customElements.define("spin-box", SpinBox);

class DlgButton extends CadElement {
    css() {
        const main = this.hasAttribute("main");
        return `:host{display:flex;align-items:center;justify-content:center;width:54px;height:15px;background:#e1e1e1;border:${main ? "2px solid #0078d7" : "1px solid #adadad"}}`;
    }
}
customElements.define("dlg-button", DlgButton);

class TablePreview extends CadElement {
    css() {
        return `:host{display:flex;justify-content:center;align-items:flex-start;width:227px;height:150px;padding-top:3px;background:#000;border:1px solid #999}
            .t{display:grid;grid-template:10px repeat(9,14.400px) / repeat(3,13px);border:1px solid #ccc;border-width:1px 0 0 1px;color:#fff;font:900 5.600px/6.700px var(--cjk);width:40px}
            .t span{display:flex;flex-direction:column;align-items:center;border:1px solid #ccc;border-width:0 1px 1px 0}
            .t i{font-style:normal;height:6.700px;-webkit-text-stroke:.3px #fff}
            .t .h{grid-column:1/4;font-size:7.300px;line-height:9px}`;
    }
    html() {
        let cells = `<span class="h">标题</span>`;
        for (let r = 0; r < 9; r++) {
            const [a, b] = r === 0 ? "表头" : "数据";
            for (let c = 0; c < 3; c++) cells += `<span><i>${a}</i><i>${b}</i></span>`;
        }
        return `<div class="t">${cells}</div>`;
    }
}
customElements.define("table-preview", TablePreview);

class TableDialog extends CadElement {
    css() {
        return `:host{position:absolute;left:246px;top:90px;width:509px;height:348px;background:#f0f0f0;border:1px solid #5fb3c2;font:8.700px/11px var(--cjk);color:#111}
            header{display:flex;align-items:center;height:22px;background:#fff;padding:0 7px 0 5px;gap:2px}
            header span{flex:1;margin-top:-2px}
            header svg{margin-top:-2px}
            .cols{display:flex;justify-content:space-between;padding:8px 9px 0 7px}
            .col{width:242px;display:flex;flex-direction:column}
            .r{display:flex;align-items:flex-start}
            .ib{width:18px;height:18px;border:1px solid #aaa;background:#e1e1e1;display:flex;align-items:center;justify-content:center;margin-left:6px}
            .ck{width:10px;height:10px;border:1px solid #444;background:#fff;margin-right:2px}
            .set{display:grid;grid-template-columns:21px 112px 51px 1fr;align-items:center;padding-left:2px}
            hr{border:0;border-top:1px solid #aaa;width:208px;margin:8px 0 4px 2px}
            .cell{display:grid;grid-template-columns:130px 68px;grid-auto-rows:15px;row-gap:3.300px;padding-left:1px;margin-top:-1px}
            .cell span{margin-top:1px}
            footer{display:flex;align-items:center;padding:7px 9px 0 8px}
            footer a{color:#4b1fd0;text-decoration:underline;margin:-2px auto 0 5px}
            footer dlg-button{margin-left:9px}`;
    }
    html() {
        return `
            <header><svg width="14" height="14"><path fill="#777" d="M0 5h12v7H0z"/><path fill="#bbb" d="M7 4h6v7H7z"/><path fill="#e22" d="M2 9L5 0h2l3 9H8L7.500 7h-3L4 9zM5 5h2L6 2z"/></svg><span>插入表格</span>
                <svg width="9" height="9" stroke="#222"><path d="M1 1l7 7M8 1L1 8"/></svg></header>
            <div class="cols">
                <div class="col">
                    <group-box h="30" label="表格样式">
                        <div class="r" style="margin-top:2px"><dlg-select w="86">建筑设计</dlg-select><span class="ib"><cad-icon name="tablebtn"></cad-icon></span></div>
                    </group-box>
                    <group-box h="75" label="插入选项" style="margin-top:7px">
                        <radio-item on style="margin-top:.5px"><key-label key="S">从空表格开始</key-label></radio-item>
                        <radio-item style="margin-top:1.500px"><key-label key="L">自数据链接</key-label></radio-item>
                        <div class="r" style="padding-left:9px;height:17px;margin-top:-1px"><dlg-select w="106" off>找不到数据链接</dlg-select><span class="ib" style="height:17px;background:#ccc"><cad-icon name="linkbtn"></cad-icon></span></div>
                        <radio-item style="margin-top:3px"><key-label key="X">自图形中的对象数据 (数据提取)</key-label></radio-item>
                    </group-box>
                    <group-box h="165" style="margin-top:10px">
                        <span slot="title" class="r" style="align-items:center;padding-left:1px"><i class="ck"><svg width="8" height="8" style="display:block" fill="none" stroke="#222"><path d="M1 4l2 2 4-5"/></svg></i><key-label key="P">预览</key-label></span>
                        <table-preview style="margin:1px 0 0 -.5px"></table-preview>
                    </group-box>
                </div>
                <div class="col">
                    <group-box h="35" label="插入方式">
                        <radio-item on style="margin-top:-2px"><key-label key="I">指定插入点</key-label></radio-item>
                        <radio-item><key-label key="W">指定窗口</key-label></radio-item>
                    </group-box>
                    <group-box h="86" label="列和行设置" style="margin-top:9px">
                        <div class="set"><i></i><key-label key="C" colon>列数</key-label><key-label key="D" colon>列宽</key-label></div>
                        <div class="set" style="margin-top:2px"><cad-icon name="cols"></cad-icon><spin-box>5</spin-box><spin-box>63.5</spin-box></div>
                        <hr>
                        <div class="set"><i></i><key-label key="R" colon>数据行数</key-label><key-label key="G" colon>行高</key-label></div>
                        <div class="set"><cad-icon name="rows"></cad-icon><spin-box>1</spin-box><spin-box>1</spin-box><span style="padding-left:6px">行</span></div>
                    </group-box>
                    <group-box h="63" label="设置单元样式" style="margin-top:9px">
                        <div class="cell">
                            <span>第一行单元样式:</span><dlg-select w="68">标题</dlg-select>
                            <span>第二行单元样式:</span><dlg-select w="68">表头</dlg-select>
                            <span>所有其他行单元样式:</span><dlg-select w="68">数据</dlg-select>
                        </div>
                    </group-box>
                </div>
            </div>
            <footer><cad-icon name="info" size="12"></cad-icon><a>了解表格</a>
                <dlg-button main>确定</dlg-button><dlg-button>取消</dlg-button><dlg-button><key-label key="H">帮助</key-label></dlg-button></footer>`;
    }
}
customElements.define("table-dialog", TableDialog);

class PageMark extends CadElement {
    css() { return `:host{position:absolute;left:760px;top:450px;line-height:0}`; }
    html() {
        return `<svg width="120" height="95"><g fill="#fff" fill-opacity=".85" stroke="#ccc" stroke-width=".5"><ellipse cx="88" cy="15" rx="6.500" ry="9"/><ellipse cx="104" cy="16" rx="6.500" ry="9"/></g>
            <g fill="#f2f2f2" fill-opacity=".9" stroke="#aaa" stroke-width=".5"><text x="6" y="60.500" font-family="Liberation Sans, sans-serif" font-weight="700" font-size="41">Ba</text>
            <text x="7" y="84" font-family="Noto Sans, sans-serif" font-size="20">jing</text></g></svg>`;
    }
}
customElements.define("page-mark", PageMark);

class SiteBadge extends CadElement {
    css() { return `:host{position:absolute;left:800px;top:467px;width:200px;height:95px;background:#222e52}`; }
    html() {
        return `<svg width="200" height="95" fill="#cfcfcf" font-family="'Noto Sans CJK SC', sans-serif">
            <path d="M15 26l7 3 5-3 2 6-5 3c0 5 4 9 8 12 5 2 12 1 16 5 4 4 2 10 1 14l3 10h-4l-4-11-3-6c-4 2-8 1-12 0l-4 5-1 13h-5l1-14c-5-5-8-11-7-18 1-5 4-8 6-11z"/>
            <path fill="none" stroke="#cfcfcf" stroke-width="1.600" d="M24 28c6 4 13 4 17 1 5-2 9-3 13-8M24 28c-3-3-5-4-6-8M30 29c-2-4-5-5-5-9M35 30c0-3-4-6-3-10M43 29l-3-7M49 26l-2-5"/>
            <text x="63" y="52" font-size="37" textLength="43" lengthAdjust="spacingAndGlyphs">3D</text>
            <text x="107" y="50" font-size="30" font-weight="500" textLength="83" lengthAdjust="spacingAndGlyphs">溜溜网</text>
            <text x="63" y="73" font-size="21" font-weight="400" textLength="127" lengthAdjust="spacingAndGlyphs">3D66.COM</text></svg>`;
    }
}
customElements.define("site-badge", SiteBadge);
</script>
</body>
</html>
